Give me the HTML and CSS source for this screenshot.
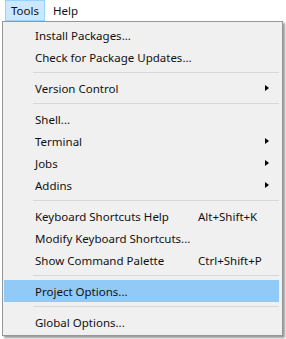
FILE: index.html
```html
<!DOCTYPE html>
<html lang="en">
<head>
  <meta charset="UTF-8">
  <title>Tools menu</title>
  <link rel="stylesheet" href="styles.css">
</head>
<body>
  <div class="menubar">
    <div class="tab open">Tools</div>
    <div class="tab">Help</div>
  </div>

  <div class="dropdown">
    <div class="item"><span class="label">Install Packages...</span></div>
    <div class="item"><span class="label">Check for Package Updates...</span></div>
    <div class="sep"></div>
    <div class="item"><span class="label">Version Control</span><span class="arrow"></span></div>
    <div class="sep"></div>
    <div class="item"><span class="label">Shell...</span></div>
    <div class="item"><span class="label">Terminal</span><span class="arrow"></span></div>
    <div class="item"><span class="label">Jobs</span><span class="arrow"></span></div>
    <div class="item"><span class="label">Addins</span><span class="arrow"></span></div>
    <div class="sep"></div>
    <div class="item"><span class="label">Keyboard Shortcuts Help</span><span class="key">Alt+Shift+K</span></div>
    <div class="item"><span class="label">Modify Keyboard Shortcuts...</span></div>
    <div class="item"><span class="label">Show Command Palette</span><span class="key">Ctrl+Shift+P</span></div>
    <div class="sep"></div>
    <div class="item selected"><span class="label">Project Options...</span></div>
    <div class="sep"></div>
    <div class="item"><span class="label">Global Options...</span></div>
  </div>
</body>
</html>
```

FILE: styles.css
```css
* {
  margin: 0;
  padding: 0;
  box-sizing: border-box;
}

body {
  background: #fff;
  font-family: 'Noto Sans', 'Open Sans', sans-serif;
  font-size: 11.5px;
  color: #111;
  height: 339px;
  overflow: hidden;
}

/* Menu bar */
.menubar {
  display: flex;
  height: 21px;
  padding-left: 5px;
}

.tab {
  padding: 0 5px;
  line-height: 19px;
  border: 1px solid transparent;
}

.tab + .tab {
  padding-left: 7px;
}

.tab.open {
  background: #cce8ff;
  border-color: #99d1ff;
}

/* Dropdown */
.dropdown {
  margin-left: 2px;
  width: 281px;
  background: #f0f0f0;
  border: 1px solid #979797;
  padding: 2px 3px 2px 1px;
  box-shadow: 2px 2px 2px rgba(0, 0, 0, 0.4);
}

.item {
  display: flex;
  align-items: center;
  height: 22px;
  padding-left: 31px;
}

.item.selected {
  background: #91c9f7;
}

.label {
  flex: 1;
  white-space: nowrap;
}

.key {
  width: 81px;
  white-space: nowrap;
}

.arrow {
  width: 0;
  height: 0;
  margin-right: 10px;
  border-top: 3.5px solid transparent;
  border-bottom: 3.5px solid transparent;
  border-left: 4px solid #000;
}

.sep {
  height: 9px;
  margin-left: 29px;
  display: flex;
  align-items: center;
}

.sep::before {
  content: '';
  flex: 1;
  height: 1px;
  background: #d7d7d7;
}
```
